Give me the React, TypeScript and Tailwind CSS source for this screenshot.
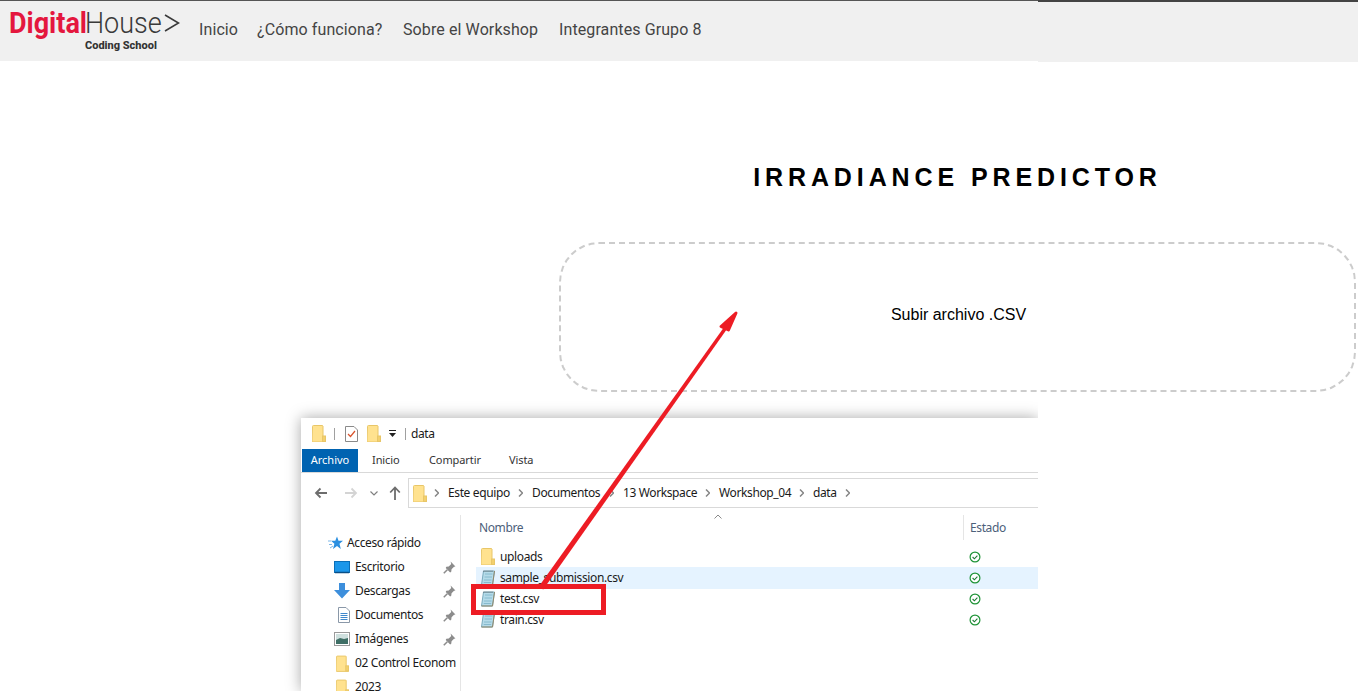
import React from 'react';

const navLinks = [
  { label: 'Inicio', width: 'w-[58px]' },
  { label: '¿Cómo funciona?', width: 'w-[146px]' },
  { label: 'Sobre el Workshop', width: 'w-[156px]' },
  { label: 'Integrantes Grupo 8', width: 'w-[150px]' },
];

const crumbs = [
  { label: 'Este equipo', width: 'w-[79px]' },
  { label: 'Documentos', width: 'w-[86px]' },
  { label: '13 Workspace', width: 'w-[91px]' },
  { label: 'Workshop_04', width: 'w-[89px]' },
  { label: 'data', width: 'w-[41px]' },
];

function Folder({ className }: { className?: string }) {
  return (
    <svg viewBox="0 0 14 17" className={className}>
      <path d="M.5 1.500a1 1 0 0 1 1-1h9l.5.5v11h3v4a1 1 0 0 1-1 1h-12a1 1 0 0 1-1-1z" fill="#ffe28f" stroke="#e8c668" />
      <rect x="10.500" y="11" width="3" height="5.500" fill="#f3d06e" stroke="#e8c668" />
    </svg>
  );
}

function CsvIcon() {
  return (
    <svg viewBox="0 0 16 16" className="h-4 w-4 shrink-0">
      <path d="M3.500 1h11L12.500 15h-11z" fill="#b5dbe9" stroke="#79aabd" />
      <path d="M5 4h7.500M4.500 7h7.500M4 10h7.500M3.700 12.500h7.500" stroke="#86bacd" />
      <path d="M1.500 15h11l2-14" fill="none" stroke="#94896a" />
      <path d="M4 .5v1.500M6 .5v1.500M8 .5v1.500M10 .5v1.500M12 .5v1.500" stroke="#555" strokeWidth=".7" />
    </svg>
  );
}

function Pin() {
  return (
    <svg viewBox="0 0 12 12" className="h-[13px] w-[13px]">
      <path d="M7 .5l4.500 4.500-1.300.4-2.300 2.300-.3 2.200-1 .6L2.500 6.400l.6-1 2.200-.3 2.300-2.300z" fill="#8c8c8c" />
      <path d="M4 8l-3.300 3.300" stroke="#8c8c8c" strokeWidth="1.400" />
    </svg>
  );
}

function StatusCheck() {
  return (
    <svg viewBox="0 0 12 12" className="h-3 w-3">
      <circle cx="6" cy="6" r="4.900" fill="#fff" stroke="#1f9437" strokeWidth="1.200" />
      <path d="M3.600 6l1.800 1.800 3-3.200" fill="none" stroke="#1f7a35" strokeWidth="1.100" />
    </svg>
  );
}

function Chevron() {
  return (
    <svg viewBox="0 0 5 8" className="h-2 w-[5px] shrink-0">
      <path d="M1 .5L4.500 4 1 7.500" fill="none" stroke="#858585" strokeWidth="1.500" />
    </svg>
  );
}

function SideIcon({ name }: { name: string }) {
  if (name === 'Escritorio') {
    return (
      <svg viewBox="0 0 16 13" className="h-[13px] w-4">
        <rect x=".5" y=".5" width="15" height="11" fill="#1c97ea" stroke="#0b6fb8" />
        <path d="M1 11.500h14" stroke="#0a4f86" strokeWidth="1.500" />
      </svg>
    );
  }
  if (name === 'Descargas') {
    return (
      <svg viewBox="0 0 16 16" className="h-4 w-4">
        <path d="M5 0h6v7h5l-8 8.500L0 7h5z" fill="#3d8fdc" />
      </svg>
    );
  }
  if (name === 'Documentos') {
    return (
      <svg viewBox="0 0 12 16" className="h-4 w-3">
        <path d="M.5.5h7.500l3.500 3.500v11.500H.5z" fill="#fff" stroke="#8a98a8" />
        <path d="M2.500 6.500h7M2.500 8.500h7M2.500 10.500h7M2.500 12.500h7" stroke="#3f88cc" />
      </svg>
    );
  }
  return (
    <svg viewBox="0 0 16 14" className="h-3.5 w-4">
      <rect x=".5" y=".5" width="15" height="13" fill="#fff" stroke="#9a9a9a" />
      <rect x="2" y="2" width="12" height="10" fill="#cfe0de" />
      <path d="M2 8l4-2 4 1 4-1v6H2z" fill="#3f6f66" />
    </svg>
  );
}

function Logo() {
  return (
    <div className="w-[199px] shrink-0 self-start pl-[9px] pt-[5px] [font-family:Roboto,sans-serif]">
      <div className="flex h-[34px] items-center">
        <span className="w-[76px] origin-left scale-x-[0.9] text-[30px] leading-none font-bold whitespace-nowrap text-[#e4173e]">
          Digital
        </span>
        <span className="w-[79px] origin-left scale-x-[0.9] text-[30px] leading-none font-light whitespace-nowrap text-[#3a3a3a]">
          House
        </span>
        <svg viewBox="0 0 16 18" className="h-[18px] w-4">
          <path d="M1 1l13.500 8L1 17" fill="none" stroke="#3a3a3a" strokeWidth="1.600" />
        </svg>
      </div>
      <div className="pl-[76px] text-[11px] leading-[12px] font-extrabold whitespace-nowrap text-[#333]">
        Coding School
      </div>
    </div>
  );
}

function Explorer() {
  const sideRows = ['Escritorio', 'Descargas', 'Documentos', 'Imágenes'];
  const files = ['sample_submission.csv', 'test.csv', 'train.csv'];

  return (
    <div className="ml-[301px] mt-[26px] w-[737px] bg-white text-[12px] tracking-[-0.38px] text-[#1a1a1a] shadow-[0_0_14px_rgba(0,0,0,0.35)] [clip-path:inset(-20px_0_0_-20px)] [font-family:'Noto_Sans',sans-serif]">
      <div className="flex h-[31px] items-center pl-[11px]">
        <Folder className="h-[17px] w-[14px]" />
        <div className="ml-[8px] h-[12px] w-px bg-[#a0a0a0]" />
        <svg viewBox="0 0 13 16" className="ml-[10px] h-4 w-[13px]">
          <path d="M.5.5h8.500l3.500 3.500v11.500H.5z" fill="#fff" stroke="#8a8a8a" />
          <path d="M3 8l2.500 2.500L10 5" fill="none" stroke="#d9532c" strokeWidth="1.200" />
        </svg>
        <Folder className="ml-[9px] h-[17px] w-[14px]" />
        <svg viewBox="0 0 7 8" className="ml-[8px] h-2 w-[7px]">
          <path d="M0 .5h7" stroke="#222" />
          <path d="M0 3h7L3.500 7z" fill="#222" />
        </svg>
        <div className="ml-[9px] h-[12px] w-px bg-[#a0a0a0]" />
        <span className="ml-[5px]">data</span>
      </div>

      <div className="flex h-[24px] border-b border-[#d9d9d9] pl-px">
        <div className="flex h-[23px] w-[56px] items-center justify-center bg-[#0063b1] text-[11px] tracking-normal text-white">Archivo</div>
        <div className="flex items-center pl-[14px] text-[11px] tracking-[-0.1px] text-[#333]">
          <span className="w-[57px]">Inicio</span>
          <span className="w-[80px]">Compartir</span>
          <span>Vista</span>
        </div>
      </div>

      <div className="mt-[5px] flex h-[30px]">
        <div className="flex w-[107px] items-center pl-[13px]">
          <svg viewBox="0 0 14 12" className="h-3 w-3.5">
            <path d="M13 6H2M6.500 1.500L2 6l4.500 4.500" fill="none" stroke="#6d6d6d" strokeWidth="1.800" />
          </svg>
          <svg viewBox="0 0 14 12" className="ml-[16px] h-3 w-3.5">
            <path d="M1 6h11M7.500 1.500L12 6l-4.500 4.500" fill="none" stroke="#d4d4d4" strokeWidth="1.800" />
          </svg>
          <svg viewBox="0 0 8 5" className="ml-[12px] h-[5px] w-2">
            <path d="M.5.500L4 4l3.500-3.500" fill="none" stroke="#808080" strokeWidth="1.200" />
          </svg>
          <svg viewBox="0 0 12 14" className="ml-[11px] h-3.5 w-3">
            <path d="M6 14V2M1.200 6.500L6 1.500l4.800 5" fill="none" stroke="#6d6d6d" strokeWidth="1.800" />
          </svg>
        </div>
        <div className="flex flex-1 items-center border border-r-0 border-[#d9d9d9] pl-[4px]">
          <Folder className="h-[17px] w-[14px]" />
          <div className="ml-[7px] flex items-center">
            {crumbs.map((c) => (
              <div key={c.label} className="flex items-center">
                <Chevron />
                <span className={`${c.width} pl-[9px] whitespace-nowrap`}>{c.label}</span>
              </div>
            ))}
            <Chevron />
          </div>
        </div>
      </div>

      <div className="mt-[7px] flex h-[176px] overflow-hidden">
        <div className="w-[160px] shrink-0 overflow-hidden border-r border-[#e5e5e5] pt-[16px]">
          <div className="flex h-6 items-center pl-[27px]">
            <svg viewBox="0 0 15 14" className="h-3.5 w-[15px] shrink-0">
              <path d="M9 .5l1.500 4.300H15l-3.500 2.900L12.800 13 9 9.900 5 13l1.400-5.300L3 4.800h4.300z" fill="#2b8fe0" />
              <path d="M0 5h3M1 8.500h3M2 12l3-2" stroke="#7db7e8" />
            </svg>
            <span className="ml-[4px] whitespace-nowrap">Acceso rápido</span>
          </div>
          {sideRows.map((name) => (
            <div key={name} className="flex h-6 items-center">
              <div className="flex w-[54px] justify-end pr-[5px]">
                <SideIcon name={name} />
              </div>
              <span className="w-[88px] whitespace-nowrap">{name}</span>
              <Pin />
            </div>
          ))}
          <div className="flex h-6 items-center pl-[35px]">
            <Folder className="h-[17px] w-[13px] shrink-0" />
            <span className="ml-[6px] whitespace-nowrap">02 Control Econom</span>
          </div>
          <div className="flex h-6 items-center pl-[35px]">
            <Folder className="h-[17px] w-[13px] shrink-0" />
            <span className="ml-[6px]">2023</span>
          </div>
        </div>

        <div className="flex-1 pl-[15px]">
          <div className="relative flex h-[25px] items-center text-[#4c607a]">
            <span className="w-[487px] pl-[3px]">Nombre</span>
            <div className="h-[25px] w-px bg-[#e5e5e5]" />
            <span className="pl-[6px]">Estado</span>
            <svg viewBox="0 0 8 5" className="absolute left-[238px] top-[-1px] h-[5px] w-2">
              <path d="M.5 4.500L4 1l3.500 3.500" fill="none" stroke="#8a8a8a" />
            </svg>
          </div>
          <div className="mt-[6px] flex h-[21px] items-center">
            <div className="flex w-[493px] items-center pl-[5px]">
              <Folder className="h-[17px] w-[14px]" />
              <span className="ml-[5px]">uploads</span>
            </div>
            <StatusCheck />
          </div>
          {files.map((f, i) => (
            <div key={f} className={i === 0 ? 'flex h-[22px] items-center bg-[#e5f3ff] -mb-px' : 'flex h-[21px] items-center'}>
              <div className="flex w-[493px] items-center pl-[4px]">
                <CsvIcon />
                <span className="ml-[4px]">{f}</span>
              </div>
              <StatusCheck />
            </div>
          ))}
        </div>
      </div>
    </div>
  );
}

export default function App() {
  return (
    <div className="relative h-[691px] overflow-hidden bg-white [font-family:'Liberation_Sans',sans-serif]">
      <div className="flex items-start">
        <div className="flex h-[61px] w-[1038px] items-center border-t border-[#555] bg-[#f0f0f0]">
          <Logo />
          <nav className="flex pb-[2px] text-[16px] tracking-[0.1px] text-[#444] [font-family:Roboto,sans-serif]">
            {navLinks.map((l) => (
              <a key={l.label} className={`${l.width} whitespace-nowrap`}>
                {l.label}
              </a>
            ))}
          </nav>
        </div>
        <div className="h-[62px] flex-1 border-t-2 border-[#444] bg-[#f0f0f0]" />
      </div>

      <div className="ml-[559px] w-[797px]">
        <h1 className="mt-[100px] h-[30px] text-center text-[25px] leading-[30px] font-bold tracking-[4.900px] text-black">
          IRRADIANCE PREDICTOR
        </h1>
        <div className="mt-[50px] flex h-[150px] items-center justify-center rounded-[40px] border-2 border-dashed border-[#ccc] pb-[5px] pl-[2px] text-[16px] text-black">
          Subir archivo .CSV
        </div>
      </div>

      <Explorer />

      {/* red annotation drawn on top of the screenshot */}
      <svg className="pointer-events-none absolute inset-0 h-full w-full" viewBox="0 0 1358 691">
        <path d="M538.800 586.400L543.200 589.600 728.400 327 725.600 325z" fill="#ed1c24" />
        <path d="M736 313L728.500 330 721 326.500z" fill="#ed1c24" stroke="#ed1c24" strokeWidth="3" strokeLinejoin="round" />
        <rect x="473.500" y="586.500" width="130" height="26" fill="none" stroke="#ed1c24" strokeWidth="5" />
      </svg>
    </div>
  );
}
